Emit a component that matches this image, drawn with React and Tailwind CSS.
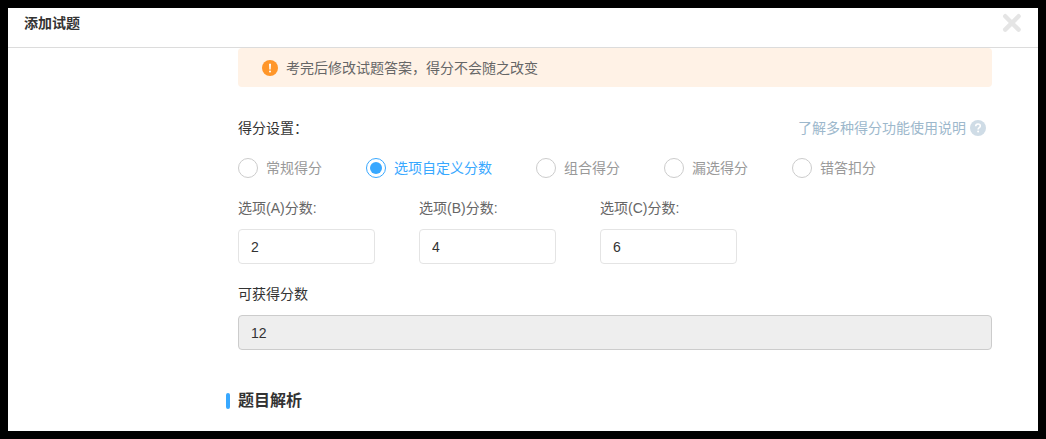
import React, { useState } from 'react';

const MODES = [
    { value: 'normal', label: '常规得分' },
    { value: 'custom', label: '选项自定义分数' },
    { value: 'group', label: '组合得分' },
    { value: 'partial', label: '漏选得分' },
    { value: 'deduct', label: '错答扣分' },
];

function App() {
    const [mode, setMode] = useState('custom');
    const [scores, setScores] = useState({ A: '2', B: '4', C: '6' });

    const total = Object.values(scores).reduce((sum, s) => sum + (Number(s) || 0), 0);

    return (
        <div className="min-h-screen bg-black p-2 flex flex-col font-['Liberation_Sans','Noto_Sans_CJK_SC',sans-serif] text-sm leading-5 text-[#333]">
            <div className="flex-1 bg-white">

                {/* Header */}
                <header className="h-10 px-4 flex items-start justify-between border-b border-[#dcdcdc]">
                    <h1 className="font-bold pt-[5px]">添加试题</h1>
                    <button type="button" aria-label="关闭" className="pt-[5px]">
                        <svg className="w-5 h-5" viewBox="0 0 20 20" fill="none" stroke="#e5e5e5" strokeWidth="4.4" strokeLinecap="round">
                            <path d="M3.2 3.2L16.6 16.6M16.6 3.2L3.2 16.6" />
                        </svg>
                    </button>
                </header>

                <main className="pl-[230px] pr-[46px] pb-4">
                    {/* Notice */}
                    <div className="h-[39px] px-6 flex items-center gap-2 rounded bg-[#fff2e6] text-[#666]">
                        <svg className="w-4 h-4" viewBox="0 0 16 16">
                            <circle cx="8" cy="8" r="8" fill="#ff9629" />
                            <path d="M7 3.8h2l-.3 5.6H7.3z" fill="#fff" />
                            <circle cx="8" cy="11.4" r="1" fill="#fff" />
                        </svg>
                        <p>考完后修改试题答案，得分不会随之改变</p>
                    </div>

                    {/* Score mode */}
                    <div className="mt-[31px] pr-1.5 flex items-center justify-between">
                        <h2 id="mode-title">得分设置：</h2>
                        <a href="#help" className="flex items-center gap-1 text-[#9db8cc]">
                            了解多种得分功能使用说明
                            <svg className="w-4 h-4" viewBox="0 0 16 16" fill="none">
                                <circle cx="8" cy="8" r="8" fill="#cfdce6" />
                                <path d="M5.7 6.3C5.7 4.8 6.7 4 8 4s2.3.8 2.3 2c0 1.6-2.2 1.6-2.2 3.4" stroke="#fff" strokeWidth="1.6" />
                                <circle cx="8.1" cy="11.6" r="1" fill="#fff" />
                            </svg>
                        </a>
                    </div>

                    <div role="radiogroup" aria-labelledby="mode-title" className="mt-5 flex flex-wrap gap-x-11 gap-y-3">
                        {MODES.map((m) => (
                            <label key={m.value} className="flex items-center gap-2 text-[#999] has-checked:text-[#38a8ff] cursor-pointer">
                                <input
                                    type="radio"
                                    name="mode"
                                    value={m.value}
                                    checked={mode === m.value}
                                    onChange={() => setMode(m.value)}
                                    className="appearance-none w-5 h-5 rounded-full border border-[#ccc] bg-white bg-clip-content p-[3px] checked:border-[#38a8ff] checked:bg-[#38a8ff]"
                                />
                                {m.label}
                            </label>
                        ))}
                    </div>

                    {/* Score of each option */}
                    <div className="mt-5 flex flex-wrap gap-x-11 gap-y-5">
                        {Object.keys(scores).map((key) => (
                            <div key={key} className="flex flex-col gap-[11px]">
                                <label htmlFor={`score-${key}`} className="text-[#666]">选项({key})分数:</label>
                                <input
                                    id={`score-${key}`}
                                    type="text"
                                    value={scores[key]}
                                    onChange={(e) => setScores({ ...scores, [key]: e.target.value })}
                                    className="w-[137px] h-[35px] px-3 rounded border border-[#e4e4e4]"
                                />
                            </div>
                        ))}
                    </div>

                    <div className="mt-5 flex flex-col gap-[11px]">
                        <label htmlFor="total">可获得分数</label>
                        <input
                            id="total"
                            type="text"
                            value={total}
                            readOnly
                            className="w-full h-[35px] px-3 rounded border border-[#ccc] bg-[#eee]"
                        />
                    </div>

                    {/* Analysis */}
                    <div className="mt-[39px] -ml-3 flex items-center gap-2">
                        <span className="w-1 h-4 rounded-sm bg-[#38a8ff]"></span>
                        <h2 className="text-base font-bold">题目解析</h2>
                    </div>
                </main>
            </div>
        </div>
    );
}

export default App;
